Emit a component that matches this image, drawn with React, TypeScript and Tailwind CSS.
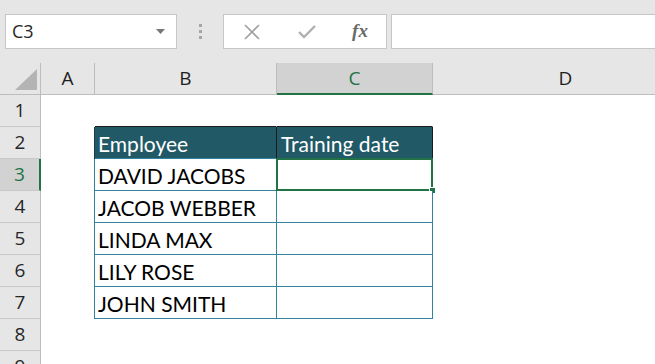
import React from "react";

const font = { fontFamily: '"Open Sans", "Noto Sans", sans-serif' };
const cellFont = { fontFamily: 'Lato, "Open Sans", sans-serif' };

const names = ["DAVID JACOBS", "JACOB WEBBER", "LINDA MAX", "LILY ROSE", "JOHN SMITH"];

function FormulaBar() {
  return (
    <div className="h-[63px] bg-[#e6e6e6] flex items-start pt-[14px] pl-[5px]">
      <div className="w-[172px] h-[35px] bg-white border border-[#c6c6c6] flex items-center justify-between pl-[6px] pr-[11px]">
        <span className="text-[18px] text-[#262626]" style={font}>C3</span>
        <svg width="9" height="5" viewBox="0 0 9 5"><path d="M0 0h9L4.5 5z" fill="#777" /></svg>
      </div>
      <div className="w-[46px] h-[35px] flex flex-col items-center justify-center gap-[3px]">
        <div className="w-[3px] h-[3px] bg-[#a6a6a6]" />
        <div className="w-[3px] h-[3px] bg-[#a6a6a6]" />
        <div className="w-[3px] h-[3px] bg-[#a6a6a6]" />
      </div>
      <div className="w-[164px] h-[35px] bg-white border border-[#c6c6c6] flex items-center">
        <div className="w-[55px] flex justify-center">
          <svg width="16" height="16" viewBox="0 0 16 16"><path d="M1 1L15 15M15 1L1 15" stroke="#a0a0a0" strokeWidth="1.6" /></svg>
        </div>
        <div className="w-[55px] flex justify-center">
          <svg width="18" height="14" viewBox="0 0 18 14"><path d="M1 7l5 5L17 1" stroke="#b0b0b0" strokeWidth="2.4" fill="none" /></svg>
        </div>
        <div className="w-[52px] flex justify-center">
          <span className="text-[19px] italic font-bold text-[#6a6a6a]" style={{ fontFamily: '"Liberation Serif", serif' }}>fx</span>
        </div>
      </div>
      <div className="ml-[4px] flex-1 h-[35px] bg-white border border-[#c6c6c6] border-r-0" />
    </div>
  );
}

function ColumnHeaders() {
  const base = "h-[32px] border-b border-r border-[#bdbdbd] flex items-center justify-center text-[19px] shrink-0 text-[#1f1f1f]";
  return (
    <div className="flex bg-[#e6e6e6]" style={font}>
      <div className="w-[41px] h-[32px] border-r border-b border-[#bdbdbd] relative shrink-0">
        <svg className="absolute right-[3px] bottom-[4px]" width="22" height="21" viewBox="0 0 22 21"><path d="M22 0V21H0z" fill="#b4b4b4" /></svg>
      </div>
      <div className={`${base} w-[54px]`}>A</div>
      <div className={`${base} w-[182px]`}>B</div>
      <div className="w-[156px] h-[32px] shrink-0 border-r border-[#bdbdbd] border-b-2 border-b-[#217346] bg-[#d2d2d2] flex items-center justify-center text-[19px] text-[#217346]">C</div>
      <div className={`${base} w-[266px]`}>D</div>
    </div>
  );
}

function RowHeader({ n, active }: { n: number; active?: boolean }) {
  return (
    <div
      className={`w-[41px] h-[32px] shrink-0 border-b border-[#c8c8c8] flex items-center justify-center text-[19px] ${
        active ? "bg-[#d2d2d2] text-[#217346] border-r-2 border-r-[#217346]" : "bg-[#e6e6e6] text-[#262626] border-r border-r-[#bdbdbd]"
      }`}
      style={font}
    >
      {n}
    </div>
  );
}

function Row({ n, b, c, kind }: { n: number; b?: string; c?: boolean; kind: "empty" | "above" | "head" | "body" }) {
  const inTable = kind === "head" || kind === "body";
  const aRight = kind === "head" ? "border-r-[#1b3d46]" : kind === "body" ? "border-r-[#31849b]" : "border-r-transparent";
  let bBottom = "border-b-transparent";
  if (kind === "above") bBottom = "border-b-[#1b1b1b]";
  if (inTable) bBottom = "border-b-[#31849b]";
  let vert = "border-r-transparent";
  if (kind === "head") vert = "border-r-[#1b1b1b]";
  if (kind === "body") vert = "border-r-[#31849b]";
  const fill = kind === "head" ? "bg-[#215967] text-white" : "bg-white text-black";
  return (
    <div className="flex h-[32px]" style={cellFont}>
      <RowHeader n={n} active={n === 3} />
      <div className={`w-[54px] h-[32px] shrink-0 border-r ${aRight} bg-white`} />
      <div className={`w-[182px] h-[32px] shrink-0 border-b border-r ${bBottom} ${vert} ${fill} flex items-center pl-[3px] pt-[2px] text-[21px] leading-none`}>
        {b}
      </div>
      <div className={`w-[156px] h-[32px] shrink-0 border-b border-r ${bBottom} ${vert} ${fill} flex items-center pl-[4px] pt-[2px] text-[21px] leading-none relative`}>
        {kind === "head" ? "Training date" : ""}
        {c && (
          <>
            <div className="absolute left-[-1px] top-[-1px] w-[157px] h-[33px] border-2 border-[#217346]" />
            <div className="absolute right-[-4px] bottom-[-4px] w-[7px] h-[7px] bg-[#217346] border border-white" />
          </>
        )}
      </div>
      <div className="flex-1 h-[32px] bg-white" />
    </div>
  );
}

export default function App() {
  return (
    <div className="w-[655px] h-[364px] overflow-hidden bg-white">
      <FormulaBar />
      <ColumnHeaders />
      <Row n={1} kind="above" />
      <Row n={2} b="Employee" kind="head" />
      {names.map((name, i) => (
        <Row key={name} n={i + 3} b={name} c={i === 0} kind="body" />
      ))}
      <Row n={8} kind="empty" />
      <Row n={9} kind="empty" />
    </div>
  );
}
